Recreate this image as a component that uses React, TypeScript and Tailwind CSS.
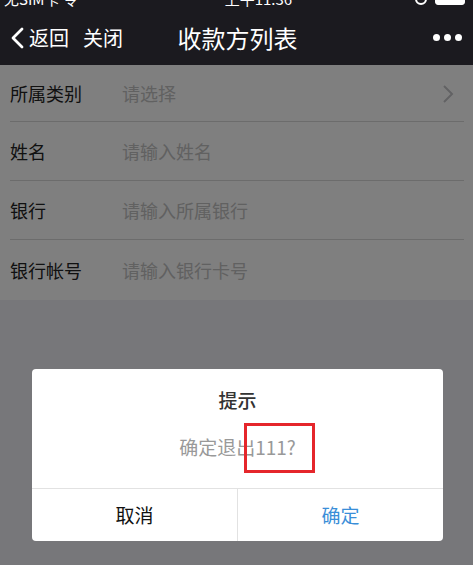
const font = { fontFamily: '"Noto Sans CJK SC", "Noto Sans", sans-serif' };

const rows = [
  { label: '所属类别', placeholder: '请选择', h: 'h-[57px]', arrow: true },
  { label: '姓名', placeholder: '请输入姓名', h: 'h-[59px]' },
  { label: '银行', placeholder: '请输入所属银行', h: 'h-[59px]' },
  { label: '银行帐号', placeholder: '请输入银行卡号', h: 'h-[60px]', last: true },
];

function NavBar() {
  return (
    <div className="h-[65px] bg-[#1b1a1f] text-white">
      {/* status bar, mostly cut off at the top */}
      <div className="h-[10px] overflow-hidden relative text-[15px] leading-[20px]">
        <div className="-mt-[11px] flex items-center justify-between px-1">
          <span>无SIM卡 令</span>
          <span className="pl-6">上午11:36</span>
          <span className="flex items-center gap-2 pr-1">
            <span className="w-[12px] h-[12px] rounded-full border-2 border-white" />
            <span className="w-[30px] h-[12px] rounded-[3px] border border-white bg-white" />
          </span>
        </div>
      </div>
      <div className="relative h-[55px] flex items-center">
        <div className="flex items-center pl-[10px]">
          <svg width="16" height="22" viewBox="0 0 16 22" className="mr-[3px]">
            <path d="M12 2 L3 11 L12 20" fill="none" stroke="white" strokeWidth="2.8" strokeLinecap="round" strokeLinejoin="round" />
          </svg>
          <span className="text-[20px]">返回</span>
          <span className="text-[20px] ml-[14px]">关闭</span>
        </div>
        <div className="absolute left-0 right-0 text-center text-[24px] pointer-events-none" style={{ paddingLeft: 2 }}>
          收款方列表
        </div>
        <div className="ml-auto flex items-center gap-[4px] pr-[11px]">
          <span className="w-[7px] h-[7px] rounded-full bg-white" />
          <span className="w-[7px] h-[7px] rounded-full bg-white" />
          <span className="w-[7px] h-[7px] rounded-full bg-white" />
        </div>
      </div>
    </div>
  );
}

export default function App() {
  return (
    <div className="relative w-[473px] h-[565px] overflow-hidden bg-[#efeff4]" style={font}>
      <NavBar />

      <div className="bg-white">
        {rows.map((r) => (
          <div key={r.label} className={`${r.h} flex items-center px-[10px] relative`}>
            <span className="w-[112px] text-[18px] text-[#222]">{r.label}</span>
            <span className="text-[18px] text-[#c2c2c2]">{r.placeholder}</span>
            {r.arrow && (
              <svg width="13" height="20" viewBox="0 0 13 20" className="ml-auto mr-[8px]">
                <path d="M2 2 L10 10 L2 18" fill="none" stroke="#c4c4c8" strokeWidth="2" />
              </svg>
            )}
            {!r.last && <div className="absolute left-[10px] right-[9px] bottom-0 h-px bg-[#d8d8d8]" />}
          </div>
        ))}
      </div>

      {/* mask */}
      <div className="absolute left-0 right-0 top-[65px] bottom-0 bg-black/50">
        <div className="relative mt-[304px] ml-[32px] w-[411px] bg-white rounded-[4px]">
          <div className="pt-[18px] text-center text-[19px] leading-[26px] font-medium text-[#333]">提示</div>
          <div className="mt-[21px] pb-[28px] text-center text-[19px] leading-[26px] text-[#999]">确定退出111?</div>
          <div className="flex h-[53px] border-t border-[#e2e2e2] text-[19px]">
            <div className="flex-1 flex items-center justify-center text-[#111] border-r border-[#e2e2e2]">取消</div>
            <div className="flex-1 flex items-center justify-center text-[#3a8ed8]">确定</div>
          </div>
          {/* red annotation box */}
          <div className="absolute left-[212px] top-[54px] w-[71px] h-[50px] border-[3px] border-[#e5262b]" />
        </div>
      </div>
    </div>
  );
}
